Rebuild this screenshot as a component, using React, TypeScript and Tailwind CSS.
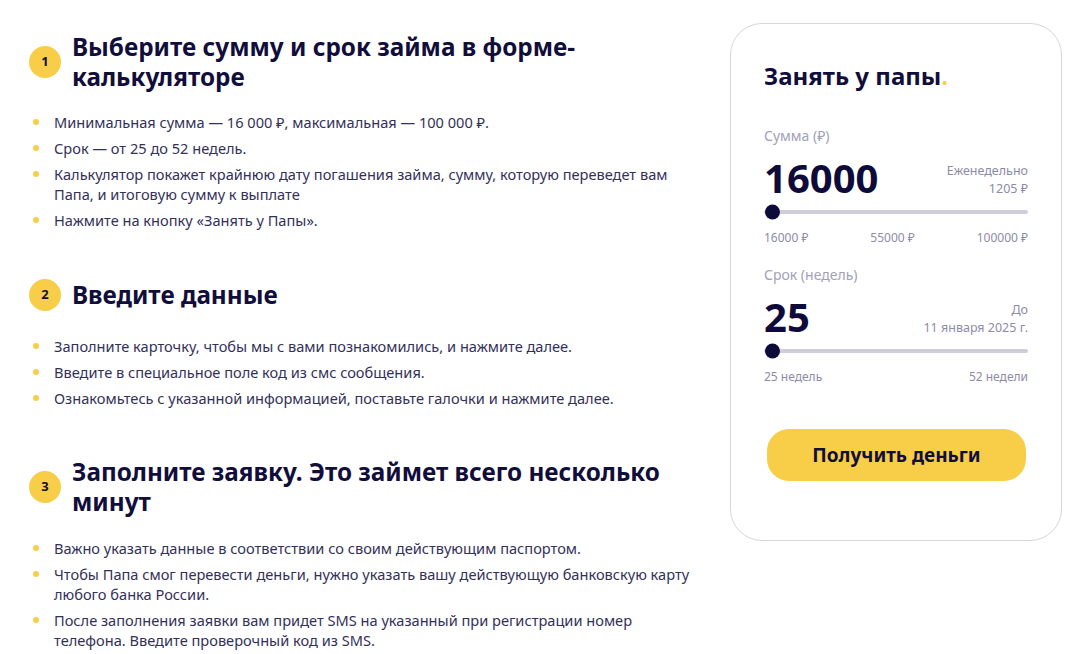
import React from 'react'

const font = { fontFamily: '"Noto Sans", "Open Sans", sans-serif' }

interface Step {
  n: number
  title: React.ReactNode
  listClass: string
  items: React.ReactNode[]
}

const steps: Step[] = [
  {
    n: 1,
    title: (
      <>
        Выберите сумму и срок займа в форме-
        <br />
        калькуляторе
      </>
    ),
    listClass: 'mt-[20px]',
    items: [
      'Минимальная сумма — 16 000 ₽, максимальная — 100 000 ₽.',
      'Срок — от 25 до 52 недель.',
      <>
        Калькулятор покажет крайнюю дату погашения займа, сумму, которую переведет вам
        <br />
        Папа, и итоговую сумму к выплате
      </>,
      'Нажмите на кнопку «Занять у Папы».',
    ],
  },
  {
    n: 2,
    title: 'Введите данные',
    listClass: 'mt-[25px]',
    items: [
      'Заполните карточку, чтобы мы с вами познакомились, и нажмите далее.',
      'Введите в специальное поле код из смс сообщения.',
      'Ознакомьтесь с указанной информацией, поставьте галочки и нажмите далее.',
    ],
  },
  {
    n: 3,
    title: (
      <>
        Заполните заявку. Это займет всего несколько
        <br />
        минут
      </>
    ),
    listClass: 'mt-[21px]',
    items: [
      'Важно указать данные в соответствии со своим действующим паспортом.',
      <>
        Чтобы Папа смог перевести деньги, нужно указать вашу действующую банковскую карту
        <br />
        любого банка России.
      </>,
      <>
        После заполнения заявки вам придет SMS на указанный при регистрации номер
        <br />
        телефона. Введите проверочный код из SMS.
      </>,
    ],
  },
]

function StepBlock({ step }: { step: Step }) {
  return (
    <div>
      <div className="flex items-center gap-[11px]">
        <div className="w-8 h-8 shrink-0 rounded-full bg-[#f8cd48] flex items-center justify-center text-[13px] font-bold text-[#110e3b]">
          {step.n}
        </div>
        <h2 className="text-[24.3px] leading-[30px] font-bold text-[#110e3b] whitespace-nowrap">
          {step.title}
        </h2>
      </div>
      <ul className={`${step.listClass} flex flex-col gap-[6px]`}>
        {step.items.map((item, i) => (
          <li key={i} className="flex text-[14.6px] leading-[20px] text-[#343158] whitespace-nowrap">
            <span className="w-[25px] shrink-0 pl-[4px] pt-[7px]">
              <span className="block w-[6px] h-[6px] rounded-full bg-[#f8cd48]" />
            </span>
            <span>{item}</span>
          </li>
        ))}
      </ul>
    </div>
  )
}

function Slider() {
  return (
    <div className="relative mt-2 h-1 rounded-full bg-[#cfcdd9]">
      <div className="absolute left-[1px] top-1/2 -translate-y-1/2 w-[15px] h-[15px] rounded-full bg-[#0e0b3a]" />
    </div>
  )
}

function Calculator() {
  return (
    <div className="w-[332px] h-[518px] shrink-0 rounded-[32px] border border-[#d6d5e0] bg-white pt-[37px] px-[33px]">
      <h3 className="text-[24px] leading-[30px] font-bold text-[#110e3b]">
        Занять у папы<span className="text-[#f8cd48]">.</span>
      </h3>

      <div className="mt-[35px] text-[14px] leading-[20px] text-[#a3a1b8]">Сумма (₽)</div>
      <div className="mt-2 flex items-center justify-between">
        <div className="text-[40px] leading-[48px] font-bold text-[#0e0b3a]">16000</div>
        <div className="text-right text-[12.5px] leading-[18px] text-[#8e8ba6] pt-[4px]">
          <div>Еженедельно</div>
          <div>1205 ₽</div>
        </div>
      </div>
      <Slider />
      <div className="mt-4 flex justify-between text-[12px] leading-[16px] text-[#8e8ba6]">
        <span>16000 ₽</span>
        <span>55000 ₽</span>
        <span>100000 ₽</span>
      </div>

      <div className="mt-[19px] text-[14px] leading-[20px] text-[#a3a1b8]">Срок (недель)</div>
      <div className="mt-2 flex items-center justify-between">
        <div className="text-[40px] leading-[48px] font-bold text-[#0e0b3a]">25</div>
        <div className="text-right text-[12.5px] leading-[18px] text-[#8e8ba6] pt-[4px]">
          <div>До</div>
          <div>11 января 2025 г.</div>
        </div>
      </div>
      <Slider />
      <div className="mt-4 flex justify-between text-[12px] leading-[16px] text-[#8e8ba6]">
        <span>25 недель</span>
        <span>52 недели</span>
      </div>

      <button className="mt-[44px] ml-[3px] w-[259px] h-[52px] rounded-[22px] bg-[#f8cd48] text-[19px] font-bold text-[#110e3b]">
        Получить деньги
      </button>
    </div>
  )
}

export default function App() {
  return (
    <div className="w-[1091px] h-[654px] overflow-hidden bg-white" style={font}>
      <div className="flex pl-[29px] pt-[23px]">
        <div className="w-[701px] shrink-0 pt-[9px] flex flex-col gap-[49px]">
          {steps.map((s) => (
            <StepBlock key={s.n} step={s} />
          ))}
        </div>
        <Calculator />
      </div>
    </div>
  )
}
